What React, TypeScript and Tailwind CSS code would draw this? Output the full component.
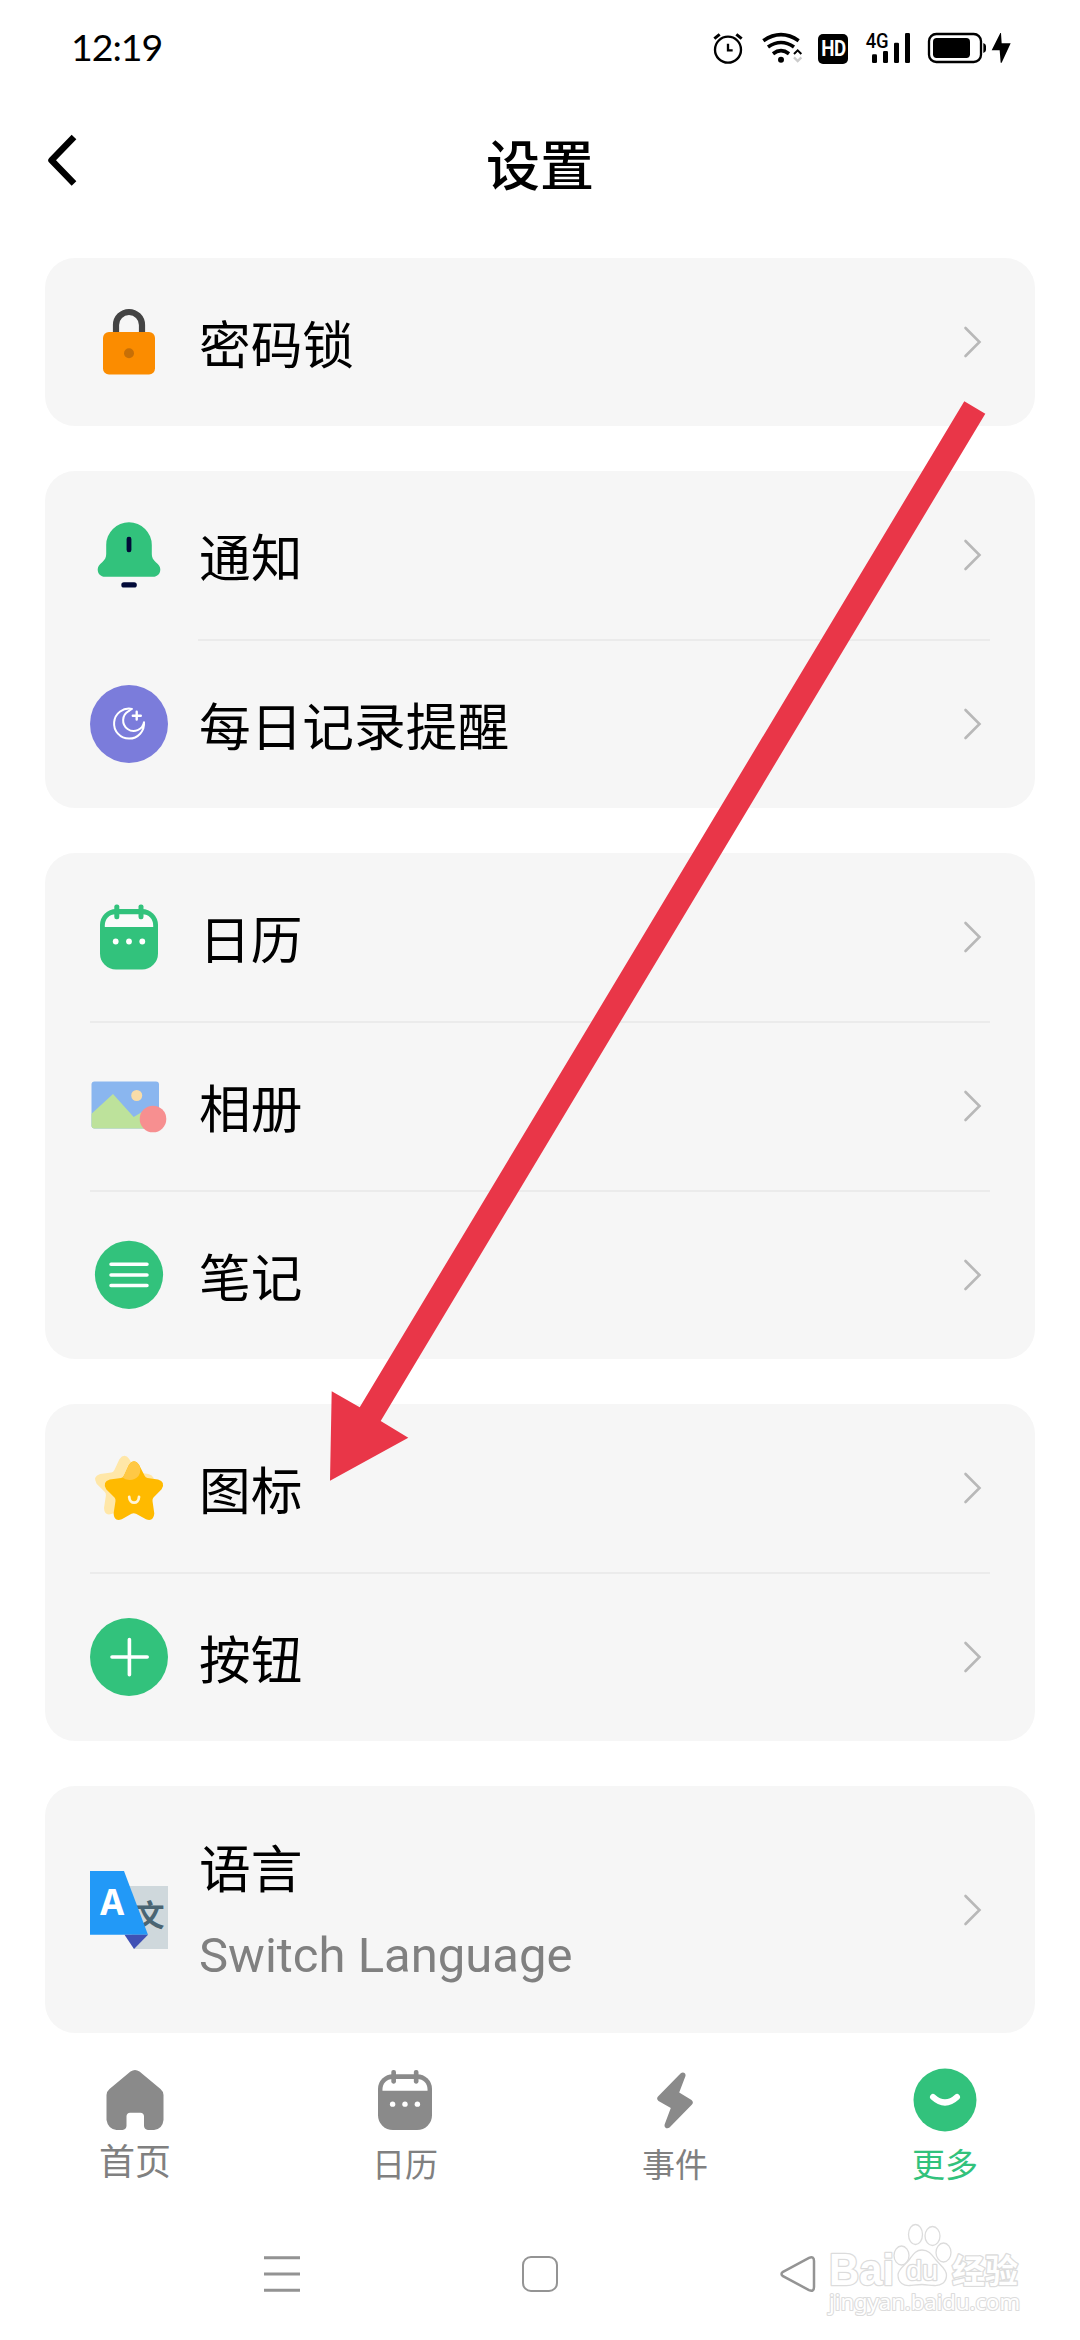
import type { ReactNode } from "react";

const GREEN = "#32c27c";

function Icon({ children, size = 78 }: { children: ReactNode; size?: number }) {
  return (
    <svg width={size} height={size} viewBox="0 0 78 78" fill="none" className="block shrink-0">
      {children}
    </svg>
  );
}

function LockIcon() {
  return (
    <Icon>
      <path d="M26 31V22a13 13 0 0 1 26 0v9" stroke="#444" strokeWidth="6.2" />
      <rect x="13" y="29" width="52" height="42.5" rx="6" fill="#fb8c00" />
      <circle cx="39" cy="50.3" r="5" fill="#c76f06" />
    </Icon>
  );
}

function BellIcon() {
  return (
    <Icon>
      <path
        d="M39 6.2A22.8 22.8 0 0 0 16.2 29v9c0 3.2-1.2 5.8-4 8.2-3 2.4-4.5 4.3-4.5 7.3 0 4.2 3 7.3 7.3 7.3h48c4.3 0 7.3-3.1 7.3-7.3 0-3-1.5-4.9-4.5-7.3-2.8-2.4-4-5-4-8.2v-9A22.8 22.8 0 0 0 39 6.2Z"
        fill={GREEN}
      />
      <rect x="36.6" y="20.7" width="4.8" height="15.5" rx="2.2" fill="#020a38" />
      <rect x="31.3" y="66.2" width="15.5" height="5.3" rx="2.6" fill="#020a38" />
    </Icon>
  );
}

function MoonIcon() {
  return (
    <Icon>
      <circle cx="39" cy="39" r="39" fill="#7b7cdb" />
      <g stroke="#fff" strokeWidth="2" strokeLinecap="round" strokeLinejoin="round">
        <path d="M42 23.9A15 15 0 1 0 54 37.2A10.5 10.5 0 1 1 38.6 26.2Q40.2 24.7 42 23.9Z" />
        <path d="M46.7 26.8v7.8M42.8 30.7h8" strokeWidth="2.4" />
      </g>
    </Icon>
  );
}

function CalendarArt({ color, hole }: { color: string; hole: string }) {
  return (
    <>
      <rect x="10" y="11" width="58" height="60.5" rx="16" fill={color} />
      <path d="M14.8 29v-1.5c0-6.5 4.5-11.2 11-11.2h26.4c6.5 0 11 4.7 11 11.2V29Z" fill={hole} />
      <rect x="24.3" y="6.4" width="5" height="14.8" rx="2.2" fill={color} />
      <rect x="48.5" y="6.4" width="5" height="14.8" rx="2.2" fill={color} />
      <circle cx="25.7" cy="43.5" r="2.9" fill="#fff" />
      <circle cx="39" cy="43.5" r="2.9" fill="#fff" />
      <circle cx="52.3" cy="43.5" r="2.9" fill="#fff" />
    </>
  );
}

function AlbumIcon() {
  return (
    <Icon>
      <rect x="1.5" y="14.5" width="67.5" height="47" rx="3" fill="#8ab6ef" />
      <path d="M1.5 46.8 23 27.1l20.7 22.8L57 42l6 8v11.5H4.5a3 3 0 0 1-3-3Z" fill="#bde29b" />
      <circle cx="46.7" cy="28.5" r="5.5" fill="#f8dca8" />
      <circle cx="63" cy="52" r="13.3" fill="#f78f90" />
    </Icon>
  );
}

function NotesIcon() {
  return (
    <Icon>
      <circle cx="39" cy="38.8" r="34.1" fill={GREEN} />
      <path d="M21 28.2h36M21 38.9h36M21 49.6h36" stroke="#fff" strokeWidth="3.5" strokeLinecap="round" />
    </Icon>
  );
}

const STAR =
  "M39 15.7Q44 9 49 15.7L54.5 26.5Q55.5 28.6 57.5 29L68 30.6Q76 33 71.6 40.2L63.5 48.6Q62.3 50 62.5 52L64.3 64.5Q63.5 73 56 70.2L46 64.8Q43.7 63.6 41.5 64.8L31.8 70.2Q24 73 23.6 64.5L25.5 52Q25.7 50 24.5 48.6L16.2 40.2Q12 33 19.8 30.6L31 29Q33 28.6 34 26.5Z";

function StarIcon() {
  return (
    <Icon>
      <path d={STAR} transform="translate(-9.6 -5.5)" fill="#ffe7a8" />
      <path d={STAR} fill="#ffba00" />
      <path d="M34 26.5L39 15.7Q44 9 49 15.7Q52 21.5 48.5 27Q45 31 39.5 31Q35 30.5 32.5 28.5Z" fill="#ffc845" />
      <path d="M39.2 48c.5 7.6 9.3 7.6 9.8 0" stroke="#fff5d8" strokeWidth="2.8" strokeLinecap="round" />
    </Icon>
  );
}

function PlusIcon() {
  return (
    <Icon>
      <circle cx="39" cy="39" r="39" fill={GREEN} />
      <path d="M22 39h35.2M39.4 21.5v35.2" stroke="#fff" strokeWidth="3.6" strokeLinecap="round" />
    </Icon>
  );
}

function TranslateIcon() {
  return (
    <Icon>
      <path d="M34 15h44v63H44Z" fill="#cfd8dc" />
      <text x="44.5" y="54.5" fontSize="30" fontWeight="700" fill="#4b6573" fontFamily="'Noto Sans CJK SC', sans-serif">
        文
      </text>
      <path d="M0 0h34l24 63.7H0Z" fill="#2299f7" />
      <path d="M34.5 63.7H58L44 78Z" fill="#3f51b5" />
      <text x="22" y="44" fontSize="35" fontWeight="700" fill="#fff" textAnchor="middle" fontFamily="'Noto Sans', sans-serif">
        A
      </text>
    </Icon>
  );
}

function Chevron() {
  return (
    <svg width="20" height="34" viewBox="0 0 20 34" fill="none" className="ml-auto block shrink-0">
      <path d="M2.500 3 16.500 17 2.500 31" stroke="#b8b8b8" strokeWidth="2.600" strokeLinecap="round" />
    </svg>
  );
}

type Item = { label: string; icon: ReactNode; sub?: string };

function Row({ item }: { item: Item }) {
  return (
    <div className={item.sub ? "flex h-[247px] items-center pr-[52px] pl-[45px]" : "flex h-[168px] items-center pr-[52px] pl-[45px]"}>
      {item.icon}
      <div className={item.sub ? "ml-[31px] flex flex-col pt-[7px]" : "ml-[31px] flex flex-col pt-[9px]"}>
        <span className="text-[51.7px] leading-[60px]">{item.label}</span>
        {item.sub && (
          <span className="mt-[25px] font-[Roboto] text-[49px] leading-[60px] text-[#808080]">{item.sub}</span>
        )}
      </div>
      <Chevron />
    </div>
  );
}

function Card({ items, inset }: { items: Item[]; inset?: boolean }) {
  return (
    <section className="rounded-[30px] bg-[#f6f6f6]">
      {items.map((item, i) => (
        <div key={item.label}>
          {i > 0 && (
            <div className={inset ? "mr-[45px] -mb-px ml-[153px] h-0.5 bg-[#ebebeb]" : "mx-[45px] -mb-px h-0.5 bg-[#ebebeb]"} />
          )}
          <Row item={item} />
        </div>
      ))}
    </section>
  );
}

function StatusBar() {
  return (
    <div className="flex h-[97px] items-center pr-[69px] pl-[71px]">
      <span className="-mt-1 font-[Lato] text-[37.5px] leading-none tracking-[-1px]">12:19</span>
      <svg width="32" height="33" viewBox="96 66 96 99" fill="none" className="ml-auto" stroke="#000">
        <circle cx="144" cy="119" r="39" strokeWidth="7" />
        <path d="M144 101v20h14" strokeWidth="7" />
        <path d="M103 86l16-13M185 86l-16-13" strokeWidth="9" />
      </svg>
      <svg width="41" height="33" viewBox="246 66 123 99" fill="none" className="ml-[18px]" stroke="#000">
        <path d="M250 92q53-36 106 0" strokeWidth="11" />
        <path d="M264 111q39-27 78 0" strokeWidth="11" />
        <path d="M279 131q24-18 48 0" strokeWidth="11" />
        <circle cx="303" cy="149" r="9" fill="#000" stroke="none" />
        <path d="M342 132l11-11 11 11" strokeWidth="6" />
        <path d="M342 142l11 11 11-11" stroke="#ccc" strokeWidth="7" />
      </svg>
      <div className="ml-[15px] flex h-[30px] w-[30px] items-center justify-center rounded-[5px] bg-black">
        <span className="[transform:scaleX(0.85)] font-[Roboto] text-[22px] leading-none font-bold tracking-[-0.5px] text-white">HD</span>
      </div>
      <svg width="46" height="33" viewBox="555 66 138 99" className="ml-[17px] overflow-visible">
        <text x="557" y="113" fontSize="58" fontWeight="500" textLength="69" lengthAdjust="spacingAndGlyphs" fontFamily="Roboto, sans-serif">
          4G
        </text>
        <rect x="576" y="133" width="15" height="26" rx="4" />
        <rect x="609" y="123" width="15" height="36" rx="4" />
        <rect x="642" y="98" width="15" height="61" rx="4" />
        <rect x="675" y="69" width="15" height="90" rx="4" />
      </svg>
      <svg width="60" height="33" viewBox="741 66 180 99" fill="none" className="ml-4">
        <rect x="747" y="72" width="156" height="84" rx="22" stroke="#000" strokeWidth="7" />
        <rect x="759" y="84" width="111" height="60" rx="11" fill="#000" />
        <path d="M910 99q8 3 8 9v12q0 6-8 9Z" fill="#000" />
      </svg>
      <svg width="20" height="33" viewBox="933 66 60 99" className="ml-1">
        <path d="M961 69 935 121h24l3 37h3l27-58h-27l-2-31Z" />
      </svg>
    </div>
  );
}

function Header() {
  return (
    <header className="grid h-[161px] grid-cols-[1fr_auto_1fr] items-start pt-[34px]">
      <svg width="34" height="58" viewBox="0 0 34 58" fill="none" className="ml-[45px]">
        <path d="M29 6 6.500 29.200 29 52.500" stroke="#000" strokeWidth="6.500" strokeLinejoin="round" />
      </svg>
      <h1 className="mt-[3px] text-[54px] leading-[68px] font-medium">设置</h1>
      <span />
    </header>
  );
}

function Tab({ icon, label, className }: { icon: ReactNode; label: string; className: string }) {
  return (
    <div className="flex w-[270px] flex-col items-center">
      <div className="flex h-[64px] items-center justify-center">{icon}</div>
      <span className={className}>{label}</span>
    </div>
  );
}

function TabBar() {
  return (
    <nav className="flex h-[171px] pt-[35px]">
      <Tab
        label="首页"
        className="mt-[9px] text-[36px] leading-[44px] text-[#808080]"
        icon={
          <svg width="58" height="60" viewBox="0 0 58 60">
            <path
              d="M24.5 1.5q4.5-3 9 0L54.5 19q3 2.6 3 6v25q-1 9-9.5 10h-6q-3.7-.5-4-4V46q-.3-3-3.5-3.300H24q-3.200.3-3.500 3.300v10q-.3 3.500-4 4h-6q-8.500-1-10-10V25q0-3.400 3-6Z"
              fill="#8a8a8a"
            />
          </svg>
        }
      />
      <Tab
        label="日历"
        className="mt-3 text-[33px] leading-[44px] text-[#808080]"
        icon={
          <svg width="54" height="60" viewBox="10 6.4 58 65.1" preserveAspectRatio="none">
            <CalendarArt color="#8a8a8a" hole="#fff" />
          </svg>
        }
      />
      <Tab
        label="事件"
        className="mt-3 text-[33px] leading-[44px] text-[#808080]"
        icon={
          <svg width="36" height="57" viewBox="0 0 36 57">
            <path
              d="M23.500 1.500C26-.8 29.500 1 28.300 4.500L22.200 20.500 34.500 28q2.500 2 .5 4.500L12.500 55.500c-2.500 2-6 0-4.700-3.500L13.800 36 1.500 29q-2.500-2-.5-4.500Z"
              fill="#8a8a8a"
            />
          </svg>
        }
      />
      <Tab
        label="更多"
        className="mt-3 text-[33px] leading-[44px] text-[#32c27c]"
        icon={
          <svg width="64" height="64" viewBox="0 0 64 64" fill="none">
            <circle cx="32" cy="32" r="31.500" fill={GREEN} />
            <path d="M20 29q12 11 24 0" stroke="#fff" strokeWidth="6" strokeLinecap="round" />
          </svg>
        }
      />
    </nav>
  );
}

function Watermark() {
  return (
    <svg
      width="200"
      height="100"
      viewBox="825 2220 200 100"
      fill="#fff"
      stroke="#dcdcdc"
      strokeWidth="1.300"
      strokeLinejoin="round"
      className="absolute top-[2220px] left-[825px]"
    >
      <text x="829" y="2285" fontSize="44" fontWeight="700" textLength="65" lengthAdjust="spacingAndGlyphs" fontFamily="'Liberation Sans', sans-serif" strokeWidth="2.600" paintOrder="stroke">
        Bai
      </text>
      <ellipse cx="901.500" cy="2255.500" rx="7.500" ry="9.500" />
      <ellipse cx="915.500" cy="2234.500" rx="7" ry="10" />
      <ellipse cx="932.500" cy="2236" rx="7.500" ry="9.500" />
      <ellipse cx="943.500" cy="2252.500" rx="7.500" ry="9.500" />
      <path d="M922 2250c-7 0-9 5-13 10s-11 9-11 15c0 8 6 11 12 10.500 5-.5 8-1 12-1s8 .8 12 1c7 .5 12.500-3 12.500-10.500 0-6-6.500-10-10.500-15s-7-10-14-10Z" />
      <text x="906" y="2280" fontSize="27" textLength="32" lengthAdjust="spacingAndGlyphs" fontFamily="'Liberation Sans', sans-serif" strokeWidth="2.600" paintOrder="stroke">
        du
      </text>
      <text x="952" y="2283" fontSize="33" fontWeight="700" fontFamily="'Noto Sans CJK SC', sans-serif" strokeWidth="2.600" paintOrder="stroke">
        经验
      </text>
      <text x="829" y="2310" fontSize="22" textLength="191" lengthAdjust="spacingAndGlyphs" fontFamily="'Noto Sans', sans-serif" strokeWidth="2.200" paintOrder="stroke">
        jingyan.baidu.com
      </text>
    </svg>
  );
}

function SystemNav() {
  return (
    <div className="flex h-[140px] items-center pl-[264px]">
      <svg width="36" height="36" viewBox="0 0 36 36" stroke="#939393" strokeWidth="3">
        <path d="M0 1.800h36M0 18h36M0 34.300h36" />
      </svg>
      <div className="ml-[222px] h-9 w-9 rounded-[9px] border-[2.5px] border-[#949494]" />
      <svg width="36" height="36" viewBox="0 0 36 36" fill="none" className="ml-[222px]">
        <path d="M3 15.800 29 1.900q5-2 5 3v26.200q0 5-5 3L3 20.200q-3-2.200 0-4.400Z" stroke="#949494" strokeWidth="2.500" />
      </svg>
    </div>
  );
}

export default function App() {
  return (
    <div className="relative flex h-[2340px] w-[1080px] flex-col overflow-hidden bg-white font-['Roboto','Noto_Sans_CJK_SC',sans-serif] text-black">
      <StatusBar />
      <Header />
      <main className="flex flex-col gap-[45px] px-[45px]">
        <Card items={[{ label: "密码锁", icon: <LockIcon /> }]} />
        <Card
          inset
          items={[
            { label: "通知", icon: <BellIcon /> },
            { label: "每日记录提醒", icon: <MoonIcon /> },
          ]}
        />
        <Card
          items={[
            {
              label: "日历",
              icon: (
                <Icon>
                  <CalendarArt color={GREEN} hole="#fbfbfb" />
                </Icon>
              ),
            },
            { label: "相册", icon: <AlbumIcon /> },
            { label: "笔记", icon: <NotesIcon /> },
          ]}
        />
        <Card
          items={[
            { label: "图标", icon: <StarIcon /> },
            { label: "按钮", icon: <PlusIcon /> },
          ]}
        />
        <Card items={[{ label: "语言", sub: "Switch Language", icon: <TranslateIcon /> }]} />
      </main>
      <TabBar />
      <div className="h-[136px] shrink-0">
        <SystemNav />
      </div>
      <Watermark />
      <svg width="660" height="1084" viewBox="328 399 660 1084" className="absolute top-[399px] left-[328px]">
        <path d="M964.3 401.3 985.3 413.7 380.7 1421 408.3 1437.7 330 1480.7 331.7 1391.3 359.7 1407.3Z" fill="#e93648" />
      </svg>
    </div>
  );
}
